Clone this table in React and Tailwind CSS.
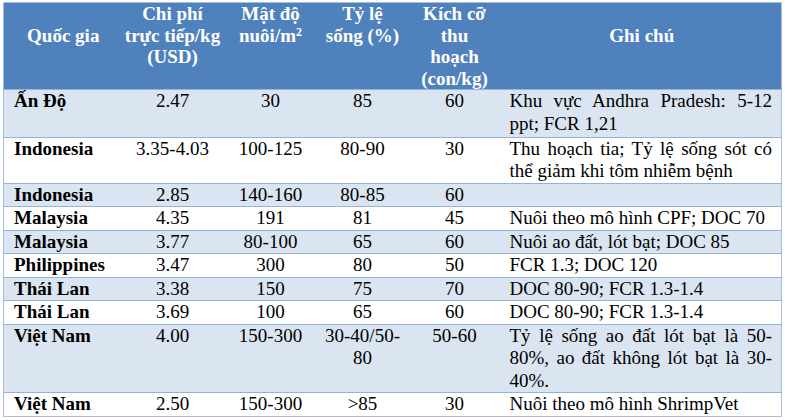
import React from "react";

const rows = [
  { country: "Ấn Độ", cost: "2.47", density: "30", survival: "85", size: "60", note: "Khu vực Andhra Pradesh: 5-12 ppt; FCR 1,21", extra: "[&>td]:pb-[1.5px]" },
  { country: "Indonesia", cost: "3.35-4.03", density: "100-125", survival: "80-90", size: "30", note: "Thu hoạch tia; Tỷ lệ sống sót có thể giảm khi tôm nhiễm bệnh" },
  { country: "Indonesia", cost: "2.85", density: "140-160", survival: "80-85", size: "60", note: "" },
  { country: "Malaysia", cost: "4.35", density: "191", survival: "81", size: "45", note: "Nuôi theo mô hình CPF; DOC 70" },
  { country: "Malaysia", cost: "3.77", density: "80-100", survival: "65", size: "60", note: "Nuôi ao đất, lót bạt; DOC 85" },
  { country: "Philippines", cost: "3.47", density: "300", survival: "80", size: "50", note: "FCR 1.3; DOC 120" },
  { country: "Thái Lan", cost: "3.38", density: "150", survival: "75", size: "70", note: "DOC 80-90; FCR 1.3-1.4" },
  { country: "Thái Lan", cost: "3.69", density: "100", survival: "65", size: "60", note: "DOC 80-90; FCR 1.3-1.4" },
  { country: "Việt Nam", cost: "4.00", density: "150-300", survival: "30-40/50-80", size: "50-60", note: "Tỷ lệ sống ao đất lót bạt là 50-80%, ao đất không lót bạt là 30-40%." },
  { country: "Việt Nam", cost: "2.50", density: "150-300", survival: ">85", size: "30", note: "Nuôi theo mô hình ShrimpVet" },
];

const App = () => {
  return (
    <div className="w-[785px] h-[420px] bg-white pt-[2px] pl-[3px] font-serif text-[19px] text-black">
      <table className="w-[778px] table-fixed border-collapse border border-[#a7bfdc] [font-family:Liberation_Serif,Times_New_Roman,serif]">
        <colgroup>
          <col className="w-[119px]" />
          <col className="w-[100px]" />
          <col className="w-[96px]" />
          <col className="w-[88px]" />
          <col className="w-[96px]" />
          <col className="w-[279px]" />
        </colgroup>
        <thead className="bg-[#4f81bd] text-white font-bold leading-[21.5px]">
          <tr className="h-[87px] align-top">
            <th className="pt-[21.5px] px-[6px] text-center">Quốc gia</th>
            <th className="px-[2px] text-center">
              Chi phí
              <br />
              trực tiếp/kg
              <br />
              (USD)
            </th>
            <th className="px-[6px] text-center">
              Mật độ
              <br />
              nuôi/m<sup className="text-[12px]">2</sup>
            </th>
            <th className="px-[6px] text-center">
              Tỷ lệ
              <br />
              sống (%)
            </th>
            <th className="px-[6px] text-center">
              Kích cỡ
              <br />
              thu
              <br />
              hoạch
              <br />
              (con/kg)
            </th>
            <th className="pt-[21.5px] px-[6px] text-center">Ghi chú</th>
          </tr>
        </thead>
        <tbody className="leading-[22.5px]">
          {rows.map((row, index) => (
            <tr
              key={index}
              className={`align-top border-t border-[#95b3d7] ${index % 2 == 0 ? "bg-[#dbe5f1]" : "bg-white"} ${row.extra || ""}`}
            >
              <td className="pl-[10px] pr-[4px] font-bold text-left">{row.country}</td>
              <td className="px-[4px] text-center">{row.cost}</td>
              <td className="px-[4px] text-center">{row.density}</td>
              <td className="px-[4px] text-center">{row.survival}</td>
              <td className="px-[4px] text-center">{row.size}</td>
              <td className="pl-[7px] pr-[9px] text-justify">{row.note}</td>
            </tr>
          ))}
        </tbody>
      </table>
    </div>
  );
};

export default App;
